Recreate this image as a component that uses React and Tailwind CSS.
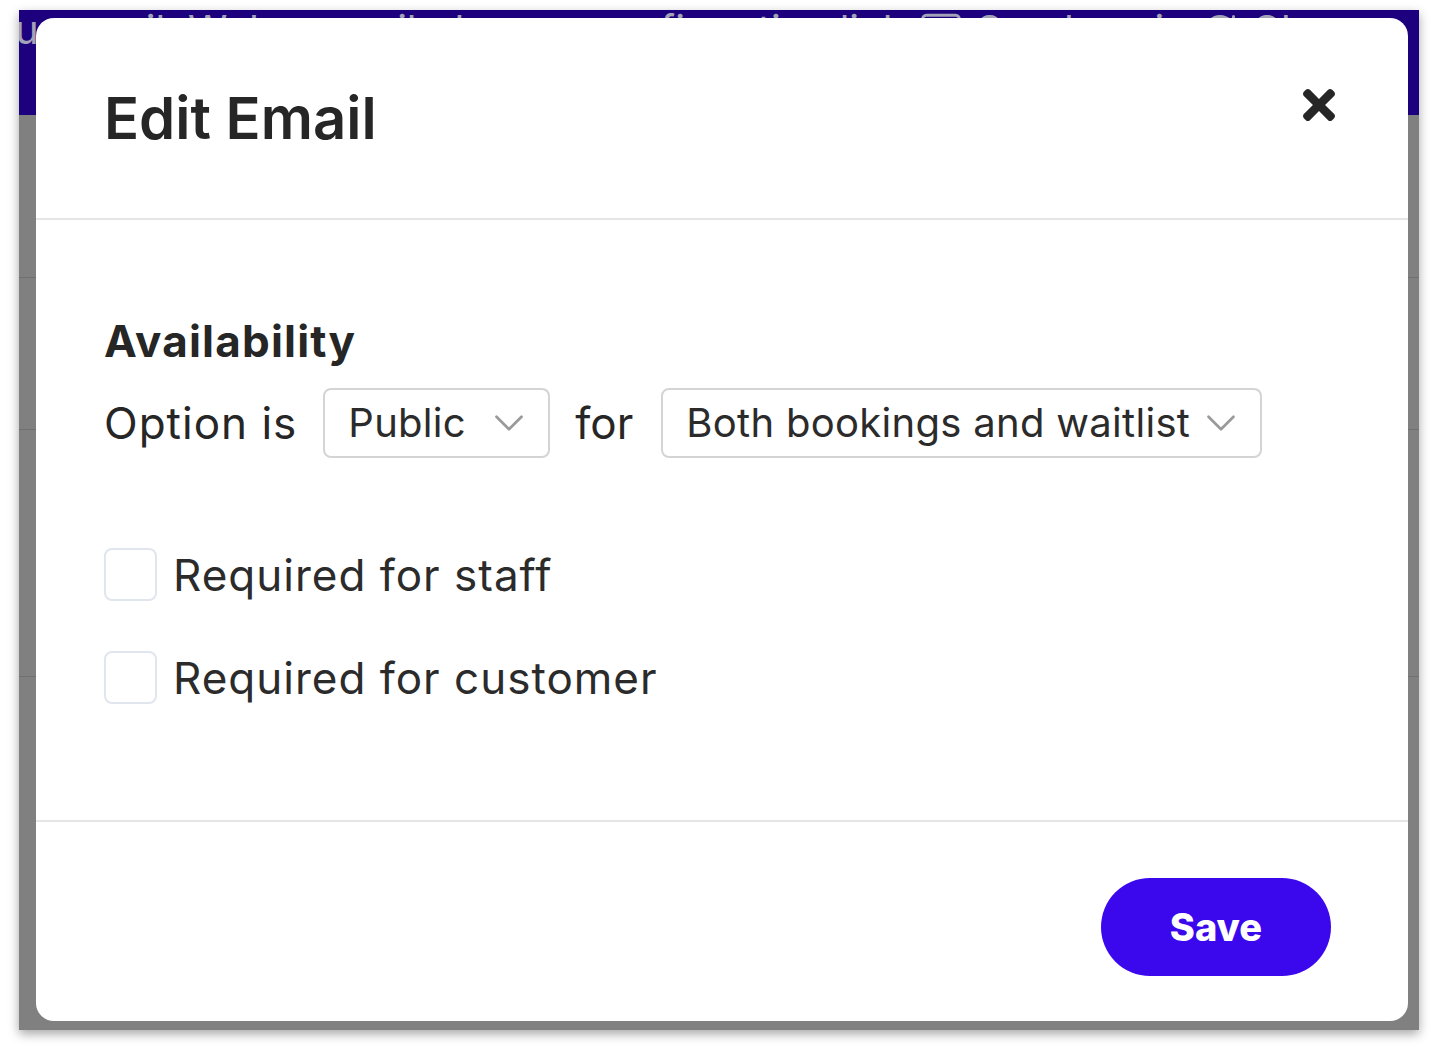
import { ChevronDown, Mail, RotateCw } from 'lucide-react';

const font = { fontFamily: 'Inter, "Noto Sans", sans-serif' };

const Select = ({ label, className }) => (
  <div
    className={`flex h-[70px] shrink-0 items-center justify-between rounded-lg border-2 border-[#d4d4d4] bg-white pl-[23px] pr-[18px] ${className}`}
  >
    <span className="whitespace-nowrap text-[40px] tracking-[0.3px] text-[#2b2b2b]">{label}</span>
    <ChevronDown size={50} strokeWidth={1.3} className="-mr-[4px] shrink-0 text-[#9a9a9a]" />
  </div>
);

const Check = ({ label }) => (
  <label className="flex items-center gap-[16px]">
    <span className="h-[53px] w-[53px] rounded-lg border-2 border-[#e1e6ee] bg-white" />
    <span className="text-[44px] leading-none tracking-[1px] text-[#2b2b2b]">{label}</span>
  </label>
);

const TimesIcon = () => (
  <svg viewBox="0 80 352 352" width="32" height="32" fill="#262626">
    <path d="M242.72 256l100.07-100.07c12.28-12.28 12.28-32.19 0-44.48l-22.24-22.24c-12.28-12.28-32.19-12.28-44.48 0L176 189.28 75.93 89.21c-12.28-12.28-32.19-12.28-44.48 0L9.21 111.45c-12.28 12.28-12.28 32.19 0 44.48L109.28 256 9.21 356.07c-12.28 12.28-12.28 32.19 0 44.48l22.24 22.24c12.28 12.28 32.2 12.28 44.48 0L176 322.72l100.07 100.07c12.28 12.28 32.2 12.28 44.48 0l22.24-22.24c12.28-12.28 12.28-32.19 0-44.48L242.72 256z" />
  </svg>
);

export default function App() {
  return (
    <div className="min-h-[1048px] w-full bg-white pl-[19px] pt-[10px]" style={font}>
      {/* page behind the modal */}
      <div className="relative h-[1020px] w-[1400px] overflow-hidden bg-[#808080] shadow-[0_4px_10px_rgba(0,0,0,0.35)]">
        <div className="h-[105px] overflow-hidden bg-[#1d007d]">
          <div className="-ml-[4px] -mt-[2px] flex items-center gap-[14px] whitespace-nowrap text-[40px] leading-[40px] text-[#a3a3b8]">
            <span>ur email. We've emailed you a confirmation link</span>
            <Mail size={44} strokeWidth={1.6} />
            <span>Send again</span>
            <RotateCw size={36} strokeWidth={2} />
            <span>Change</span>
          </div>
        </div>
        <div className="h-[163px] border-b border-[#707070]" />
        <div className="h-[152px] border-b border-[#707070]" />
        <div className="h-[247px] border-b border-[#707070]" />

        {/* modal */}
        <div className="absolute left-[17px] top-[8px] flex h-[1003px] w-[1372px] flex-col rounded-[18px] bg-white text-[#262626]">
          <div className="flex h-[202px] shrink-0 items-center justify-between border-b-2 border-[#e6e6e6] pl-[68px] pr-[73px]">
            <h1 className="text-[58px] font-semibold leading-none">Edit Email</h1>
            <button className="mb-[26px]">
              <TimesIcon />
            </button>
          </div>

          <div className="flex-1 border-b-2 border-[#e6e6e6] px-[68px] pt-[96px]">
            <h2 className="text-[44px] font-bold leading-[50px] tracking-[1.2px]">Availability</h2>
            <div className="mt-[22px] flex items-center">
              <span className="mr-[26px] text-[44px] tracking-[1px]">Option is</span>
              <Select label="Public" className="w-[227px]" />
              <span className="ml-[25px] mr-[28px] text-[44px]">for</span>
              <Select label="Both bookings and waitlist" className="w-[601px]" />
            </div>
            <div className="mt-[90px] flex flex-col gap-[50px]">
              <Check label="Required for staff" />
              <Check label="Required for customer" />
            </div>
          </div>

          <div className="flex h-[199px] shrink-0 items-start justify-end pr-[77px] pt-[56px]">
            <button className="flex h-[98px] w-[230px] items-center justify-center rounded-full bg-[#3b08ee] text-[38px] font-extrabold text-white">
              Save
            </button>
          </div>
        </div>
      </div>
    </div>
  );
}
